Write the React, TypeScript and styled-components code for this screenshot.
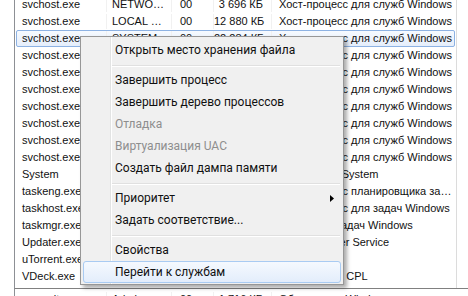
import React from 'react';
import styled, { createGlobalStyle, css } from 'styled-components';

const GlobalStyle = createGlobalStyle`
  html, body {
    margin: 0;
    padding: 0;
    background: #ffffff;
  }
`;

const LIST_FONT = `"Liberation Sans", Arial, sans-serif`;
const MENU_FONT = `Roboto, "Noto Sans", "Liberation Sans", sans-serif`;

const Screen = styled.div`
  position: relative;
  width: 468px;
  height: 296px;
  overflow: hidden;
  display: flex;
  flex-direction: column;
  background: #ffffff;
  font-family: ${LIST_FONT};
  font-size: 11px;
  color: #111111;
`;

const ListPane = styled.div`
  margin-left: 14px;
  width: 443px;
  height: 288px;
  flex-shrink: 0;
  box-sizing: border-box;
  border-left: 1px solid #8d9095;
  border-right: 1px solid #dcdcdc;
  overflow: hidden;
`;

const Rows = styled.div`
  margin-top: -4px;
`;

const Row = styled.div<{ $selected?: boolean }>`
  display: grid;
  grid-template-columns: 90px 65px 42px 58px 1fr;
  height: 17px;
  line-height: 15px;
  margin: 0 1px;
  box-sizing: border-box;
  border: 1px solid transparent;
  border-radius: 2px;
  ${({ $selected }) =>
    $selected &&
    css`
      border-color: #8db2e3;
      background: linear-gradient(#f6faff, #e5eefb);
    `}
`;

const Cell = styled.div`
  box-sizing: border-box;
  white-space: nowrap;
  overflow: hidden;
  border-right: 1px solid #f1f1f1;
`;

const NameCell = styled(Cell)`
  padding-left: 5px;
`;

const UserCell = styled(Cell)`
  padding-left: 5px;
`;

const CpuCell = styled(Cell)`
  padding-left: 8px;
`;

const MemCell = styled(Cell)`
  text-align: right;
  padding-right: 8px;
`;

const DescCell = styled(Cell)`
  padding-left: 7px;
  border-right: none;
`;

const Footer = styled.div`
  margin-left: 14px;
  height: 8px;
  padding-top: 2px;
  box-sizing: border-box;
  border-top: 1px solid #808080;
  border-left: 1px solid #8d9095;
  overflow: hidden;
`;

const Menu = styled.div`
  position: absolute;
  left: 80px;
  top: 36px;
  width: 264px;
  box-sizing: border-box;
  padding: 2px 2px 1px;
  border: 1px solid #979797;
  background: linear-gradient(
    to right,
    #f0f0f0 29px,
    #e2e3e3 29px 30px,
    #ffffff 30px 31px,
    #f0f0f0 31px
  );
  box-shadow: 3px 3px 4px rgba(0, 0, 0, 0.33);
  font-family: ${MENU_FONT};
  font-size: 12px;
`;

const MenuItem = styled.div<{ $disabled?: boolean; $hot?: boolean }>`
  display: flex;
  align-items: center;
  height: 22px;
  box-sizing: border-box;
  padding: 0 6px 0 31px;
  border: 1px solid transparent;
  border-radius: 3px;
  white-space: nowrap;
  color: ${({ $disabled }) => ($disabled ? '#8e8e8e' : '#101010')};
  ${({ $hot }) =>
    $hot &&
    css`
      border-color: #a9cbf2;
      background: linear-gradient(#f5f9fe, #e3edfb);
    `}
`;

const SubArrow = styled.svg`
  margin-left: auto;
  flex-shrink: 0;
`;

const Separator = styled.div`
  margin: 4px 1px 2px 29px;
  border-top: 1px solid #e0e0e0;
  border-bottom: 1px solid #ffffff;
`;

type Proc = [string, string, string, string, string];

const HOST = 'Хост-процесс для служб Windows';

const processes: Proc[] = [
  ['svchost.exe', 'NETWO…', '00', '3 696 КБ', HOST],
  ['svchost.exe', 'LOCAL …', '00', '12 880 КБ', HOST],
  ['svchost.exe', 'SYSTEM', '00', '22 284 КБ', HOST],
  ['svchost.exe', 'LOCAL …', '00', '5 312 КБ', HOST],
  ['svchost.exe', 'SYSTEM', '00', '9 540 КБ', HOST],
  ['svchost.exe', 'NETWO…', '00', '2 108 КБ', HOST],
  ['svchost.exe', 'LOCAL …', '00', '1 876 КБ', HOST],
  ['svchost.exe', 'SYSTEM', '00', '4 020 КБ', HOST],
  ['svchost.exe', 'LOCAL …', '00', '1 232 КБ', HOST],
  ['svchost.exe', 'LOCAL …', '00', '3 448 КБ', HOST],
  ['System', 'SYSTEM', '00', '60 КБ', 'NT Kernel & System'],
  ['taskeng.exe', 'SYSTEM', '00', '1 140 КБ', 'Хост-процесс планировщика за…'],
  ['taskhost.exe', 'Admin', '00', '3 820 КБ', 'Хост-процесс для задач Windows'],
  ['taskmgr.exe', 'Admin', '00', '3 400 КБ', 'Диспетчер задач Windows'],
  ['Updater.exe', 'SYSTEM', '00', '1 024 КБ', 'Apple Updater Service'],
  ['uTorrent.exe', 'Admin', '00', '14 300 КБ', 'µTorrent'],
  ['VDeck.exe', 'Admin', '00', '1 200 КБ', 'VIA HD Deck CPL'],
];

const SELECTED = 2;

type Entry =
  | { kind: 'item'; label: string; disabled?: boolean; hot?: boolean; sub?: boolean }
  | { kind: 'sep' };

const menu: Entry[] = [
  { kind: 'item', label: 'Открыть место хранения файла' },
  { kind: 'sep' },
  { kind: 'item', label: 'Завершить процесс' },
  { kind: 'item', label: 'Завершить дерево процессов' },
  { kind: 'item', label: 'Отладка', disabled: true },
  { kind: 'item', label: 'Виртуализация UAC', disabled: true },
  { kind: 'item', label: 'Создать файл дампа памяти' },
  { kind: 'sep' },
  { kind: 'item', label: 'Приоритет', sub: true },
  { kind: 'item', label: 'Задать соответствие...' },
  { kind: 'sep' },
  { kind: 'item', label: 'Свойства' },
  { kind: 'item', label: 'Перейти к службам', hot: true },
];

function ProcRow({ proc, selected }: { proc: Proc; selected?: boolean }) {
  const [name, user, cpu, mem, desc] = proc;
  return (
    <Row $selected={selected}>
      <NameCell>{name}</NameCell>
      <UserCell>{user}</UserCell>
      <CpuCell>{cpu}</CpuCell>
      <MemCell>{mem}</MemCell>
      <DescCell>{desc}</DescCell>
    </Row>
  );
}

export default function App() {
  return (
    <>
      <GlobalStyle />
      <Screen>
        <ListPane>
          <Rows>
            {processes.map((p, i) => (
              <ProcRow key={i} proc={p} selected={i === SELECTED} />
            ))}
          </Rows>
        </ListPane>
        <Footer>
          <ProcRow proc={['wuauclt.exe', 'Admin', '00', '1 716 КБ', 'Обновление Windows']} />
        </Footer>
        <Menu>
          {menu.map((e, i) =>
            e.kind === 'sep' ? (
              <Separator key={i} />
            ) : (
              <MenuItem key={i} $disabled={e.disabled} $hot={e.hot}>
                {e.label}
                {e.sub && (
                  <SubArrow width="4" height="7" viewBox="0 0 4 7">
                    <polygon points="0,0 4,3.5 0,7" fill="#000" />
                  </SubArrow>
                )}
              </MenuItem>
            )
          )}
        </Menu>
      </Screen>
    </>
  );
}
